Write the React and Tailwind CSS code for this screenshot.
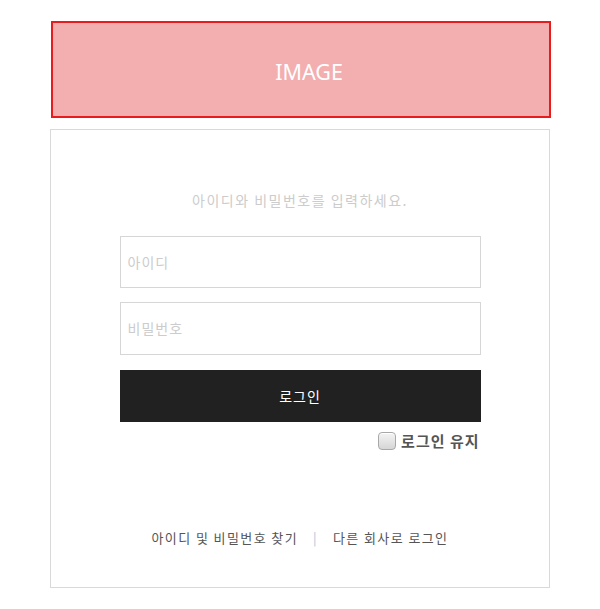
export default function App() {
  const kr = { fontFamily: '"Noto Sans CJK KR", "Noto Sans", sans-serif' };
  return (
    <div className="w-[600px] h-[609px] bg-white pt-[21px]" style={kr}>
      <div className="ml-[51px] w-[500px] h-[97px] border-2 border-[#e81c1c] bg-[#f3aeb0] flex items-center justify-center pl-[16px] pt-[4px]">
        <span className="text-white text-[21.5px] leading-none" style={{ fontFamily: '"Noto Sans", sans-serif' }}>IMAGE</span>
      </div>
      <div className="ml-[50px] mt-[11px] w-[500px] h-[459px] border border-[#d9d9d9] flex flex-col items-center pt-[60px]">
        <p className="text-[14px] leading-[20px] text-[#cccccc] tracking-[1.5px]">아이디와 비밀번호를 입력하세요.</p>
        <div className="mt-[26px] w-[361px] flex flex-col">
          <div className="h-[52px] border border-[#d6d6d6] flex items-center px-[7px]">
            <span className="text-[14px] text-[#cccccc] tracking-[1px]">아이디</span>
          </div>
          <div className="mt-[14px] h-[53px] border border-[#d6d6d6] flex items-center px-[7px]">
            <span className="text-[14px] text-[#cccccc] tracking-[1px]">비밀번호</span>
          </div>
          <div className="mt-[15px] h-[52px] bg-[#212121] flex items-center justify-center">
            <span className="text-[14px] text-white tracking-[1px]">로그인</span>
          </div>
          <div className="mt-[9px] flex items-center justify-end gap-[5px] pr-[1px]">
            <span className="w-[18px] h-[18px] rounded-[4px] border border-[#a8a8a8] bg-gradient-to-b from-[#f4f4f4] to-[#d6d6d6] shadow-[inset_0_1px_0_#fff]"></span>
            <span className="text-[15px] leading-[20px] font-bold text-[#555555] tracking-[1px]">로그인 유지</span>
          </div>
        </div>
        <div className="mt-[77px] flex items-center text-[13px] leading-[20px] text-[#555555] tracking-[1.4px]">
          <span>아이디 및 비밀번호 찾기</span>
          <span className="mx-[15px] text-[#a9c4dc]">|</span>
          <span>다른 회사로 로그인</span>
        </div>
      </div>
    </div>
  );
}
